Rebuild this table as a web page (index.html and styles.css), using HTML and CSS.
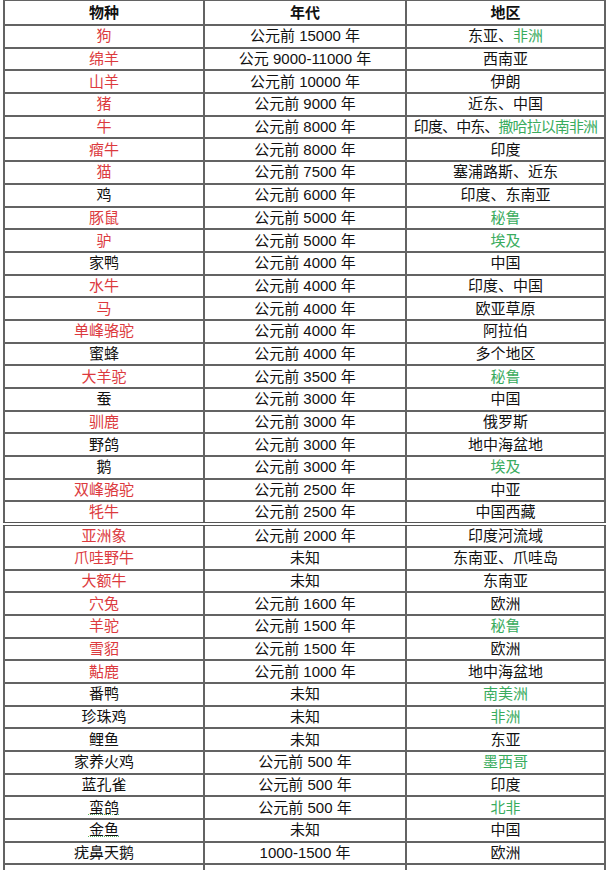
FILE: index.html
```html
<!DOCTYPE html>
<html lang="zh-CN">
<head>
<meta charset="utf-8">
<title>驯化物种</title>
<link rel="stylesheet" href="styles.css">
</head>
<body>
<table class="tbl">
<colgroup><col class="c1"><col class="c2"><col class="c3"></colgroup>
<thead>
<tr class="head"><th>物种</th><th>年代</th><th>地区</th></tr>
</thead>
<tbody>
<tr><td class="red">狗</td><td>公元前 15000 年</td><td>东亚、<span class="green">非洲</span></td></tr>
<tr><td class="red">绵羊</td><td>公元 9000-11000 年</td><td>西南亚</td></tr>
<tr><td class="red">山羊</td><td>公元前 10000 年</td><td>伊朗</td></tr>
<tr><td class="red">猪</td><td>公元前 9000 年</td><td>近东、中国</td></tr>
<tr><td class="red">牛</td><td>公元前 8000 年</td><td class="tight">印度、中东、<span class="green">撒哈拉以南非洲</span></td></tr>
<tr><td class="red">瘤牛</td><td>公元前 8000 年</td><td>印度</td></tr>
<tr><td class="red">猫</td><td>公元前 7500 年</td><td>塞浦路斯、近东</td></tr>
<tr><td>鸡</td><td>公元前 6000 年</td><td>印度、东南亚</td></tr>
<tr><td class="red">豚鼠</td><td>公元前 5000 年</td><td class="green">秘鲁</td></tr>
<tr><td class="red">驴</td><td>公元前 5000 年</td><td class="green">埃及</td></tr>
<tr><td>家鸭</td><td>公元前 4000 年</td><td>中国</td></tr>
<tr><td class="red">水牛</td><td>公元前 4000 年</td><td>印度、中国</td></tr>
<tr><td class="red">马</td><td>公元前 4000 年</td><td>欧亚草原</td></tr>
<tr><td class="red">单峰骆驼</td><td>公元前 4000 年</td><td>阿拉伯</td></tr>
<tr><td>蜜蜂</td><td>公元前 4000 年</td><td>多个地区</td></tr>
<tr><td class="red">大羊驼</td><td>公元前 3500 年</td><td class="green">秘鲁</td></tr>
<tr><td>蚕</td><td>公元前 3000 年</td><td>中国</td></tr>
<tr><td class="red">驯鹿</td><td>公元前 3000 年</td><td>俄罗斯</td></tr>
<tr><td>野鸽</td><td>公元前 3000 年</td><td>地中海盆地</td></tr>
<tr><td>鹅</td><td>公元前 3000 年</td><td class="green">埃及</td></tr>
<tr><td class="red">双峰骆驼</td><td>公元前 2500 年</td><td>中亚</td></tr>
<tr class="split"><td class="red">牦牛</td><td>公元前 2500 年</td><td>中国西藏</td></tr>
<tr><td class="red">亚洲象</td><td>公元前 2000 年</td><td>印度河流域</td></tr>
<tr><td class="red">爪哇野牛</td><td>未知</td><td>东南亚、爪哇岛</td></tr>
<tr><td class="red">大额牛</td><td>未知</td><td>东南亚</td></tr>
<tr><td class="red">穴兔</td><td>公元前 1600 年</td><td>欧洲</td></tr>
<tr><td class="red">羊驼</td><td>公元前 1500 年</td><td class="green">秘鲁</td></tr>
<tr><td class="red">雪貂</td><td>公元前 1500 年</td><td>欧洲</td></tr>
<tr><td class="red">黇鹿</td><td>公元前 1000 年</td><td>地中海盆地</td></tr>
<tr><td>番鸭</td><td>未知</td><td class="green">南美洲</td></tr>
<tr><td>珍珠鸡</td><td>未知</td><td class="green">非洲</td></tr>
<tr><td>鲤鱼</td><td>未知</td><td>东亚</td></tr>
<tr><td>家养火鸡</td><td>公元前 500 年</td><td class="green">墨西哥</td></tr>
<tr><td>蓝孔雀</td><td>公元前 500 年</td><td>印度</td></tr>
<tr><td><span class="spell">蛮鸽</span></td><td>公元前 500 年</td><td class="green">北非</td></tr>
<tr><td><span class="spell">金鱼</span></td><td>未知</td><td>中国</td></tr>
<tr><td>疣鼻天鹅</td><td>1000-1500 年</td><td>欧洲</td></tr>
<tr><td></td><td></td><td></td></tr>
</tbody>
</table>
</body>
</html>
```

FILE: styles.css
```css
html, body {
  margin: 0;
  padding: 0;
  background: #ffffff;
}
body {
  width: 607px;
  height: 870px;
  overflow: hidden;
  font-family: "Liberation Sans", "Noto Sans CJK SC", sans-serif;
  font-size: 15px;
  color: #111;
}
.tbl {
  margin: -1px 0 0 3px;
  width: 601px;
  border-collapse: collapse;
  table-layout: fixed;
}
.c1 { width: 200px; }
.c2 { width: 202px; }
.c3 { width: 199px; }
.tbl th,
.tbl td {
  border: 2px solid #636363;
  padding: 0;
  text-align: center;
  vertical-align: middle;
  line-height: 16px;
  white-space: nowrap;
  overflow: hidden;
}
.head th {
  height: 23px;
  font-weight: bold;
  color: #111;
}
.tbl tbody tr {
  height: 22.7px;
}
.tbl tbody tr.split td {
  border-bottom: 4px double #555;
}
.red { color: #dc3a3e; }
.green { color: #3aac5e; }
.tight { letter-spacing: -0.9px; }
.spell {
  text-decoration: underline dotted #58b868;
  text-decoration-thickness: 1px;
  text-underline-offset: 1px;
}
```
